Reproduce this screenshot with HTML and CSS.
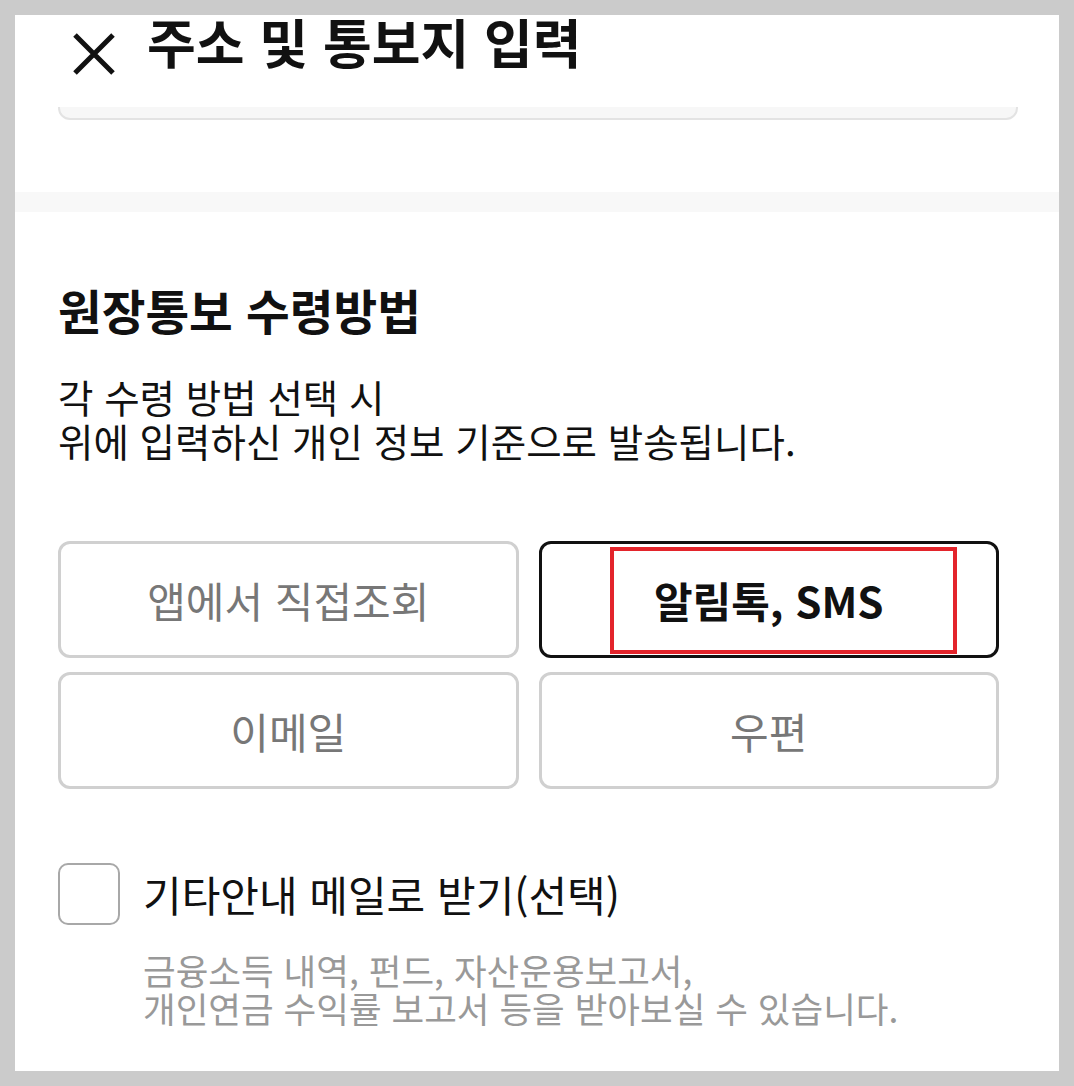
FILE: index.html
```html
<!DOCTYPE html>
<html lang="ko">
<head>
  <meta charset="UTF-8" />
  <meta name="viewport" content="width=device-width, initial-scale=1.0"/>
  <title>주소 및 통보지 입력</title>
  <link rel="stylesheet" href="styles.css">
</head>
<body>

<div class="screen">
  <header class="header">
    <svg class="close" viewBox="0 0 42 42" aria-label="닫기">
      <path d="M2 2 L40 40 M40 2 L2 40" stroke="#111" stroke-width="5" fill="none"/>
    </svg>
    <h1 class="title">주소 및 통보지 입력</h1>
  </header>

  <div class="content">
    <div class="card"></div>
    <div class="band"></div>

    <section class="section">
      <h2 class="heading">원장통보 수령방법</h2>
      <p class="desc">각 수령 방법 선택 시<br>위에 입력하신 개인 정보 기준으로 발송됩니다.</p>

      <div class="options">
        <button class="option">앱에서 직접조회</button>
        <button class="option selected">알림톡, SMS<span class="mark"></span></button>
        <button class="option">이메일</button>
        <button class="option">우편</button>
      </div>

      <label class="check">
        <span class="box"></span>
        <span class="check-label">기타안내 메일로 받기(선택)</span>
      </label>
      <p class="note">금융소득 내역, 펀드, 자산운용보고서,<br>개인연금 수익률 보고서 등을 받아보실 수 있습니다.</p>
    </section>
  </div>
</div>

</body>
</html>
```

FILE: styles.css
```css
* { box-sizing: border-box; }
body { margin: 0; background: #cbcbcb; font-family: "Noto Sans CJK KR", "Noto Sans", sans-serif; color: #111; }
.screen { margin: 15px; width: 1044px; height: 1056px; background: #fff; overflow: hidden; }

.header { height: 92px; display: flex; align-items: flex-start; padding-left: 58px; background: #fff; }
.close { width: 42px; height: 42px; margin-top: 18px; flex: none; }
.title { margin: 0 0 0 32px; font-size: 53px; line-height: 53px; font-weight: 700; white-space: nowrap; }

.content { overflow: hidden; }
.card { height: 56px; margin: -43px 41px 0 43px; background: #f7f7f7; border: 2px solid #e3e3e3; border-radius: 12px; }
.band { height: 20px; margin-top: 72px; background: #f8f8f8; }

.section { padding: 0 60px 0 43px; }
.heading { margin: 74px 0 0; font-size: 47.5px; line-height: 47px; font-weight: 700; }
.desc { margin: 41px 0 0; font-size: 38.5px; line-height: 44px; }

.options { display: grid; grid-template-columns: 1fr 1fr; gap: 14px 20px; margin-top: 79px; }
.option { height: 117px; background: #fff; border: 3px solid #d0d0d0; border-radius: 12px; font-family: inherit; font-size: 42px; color: #777; padding: 0; }
.option.selected { position: relative; border-color: #111; color: #111; font-weight: 700; }
.mark { position: absolute; left: 68px; top: 3px; width: 347px; height: 107px; border: 4px solid #e3242b; }

.check { display: flex; align-items: center; gap: 23px; margin-top: 74px; }
.box { width: 62px; height: 62px; border: 2px solid #a8a8a8; border-radius: 10px; flex: none; }
.check-label { font-size: 42px; line-height: 50px; color: #111; }
.note { margin: 26px 0 0 85px; font-size: 35.5px; line-height: 38px; color: #999; }
```
